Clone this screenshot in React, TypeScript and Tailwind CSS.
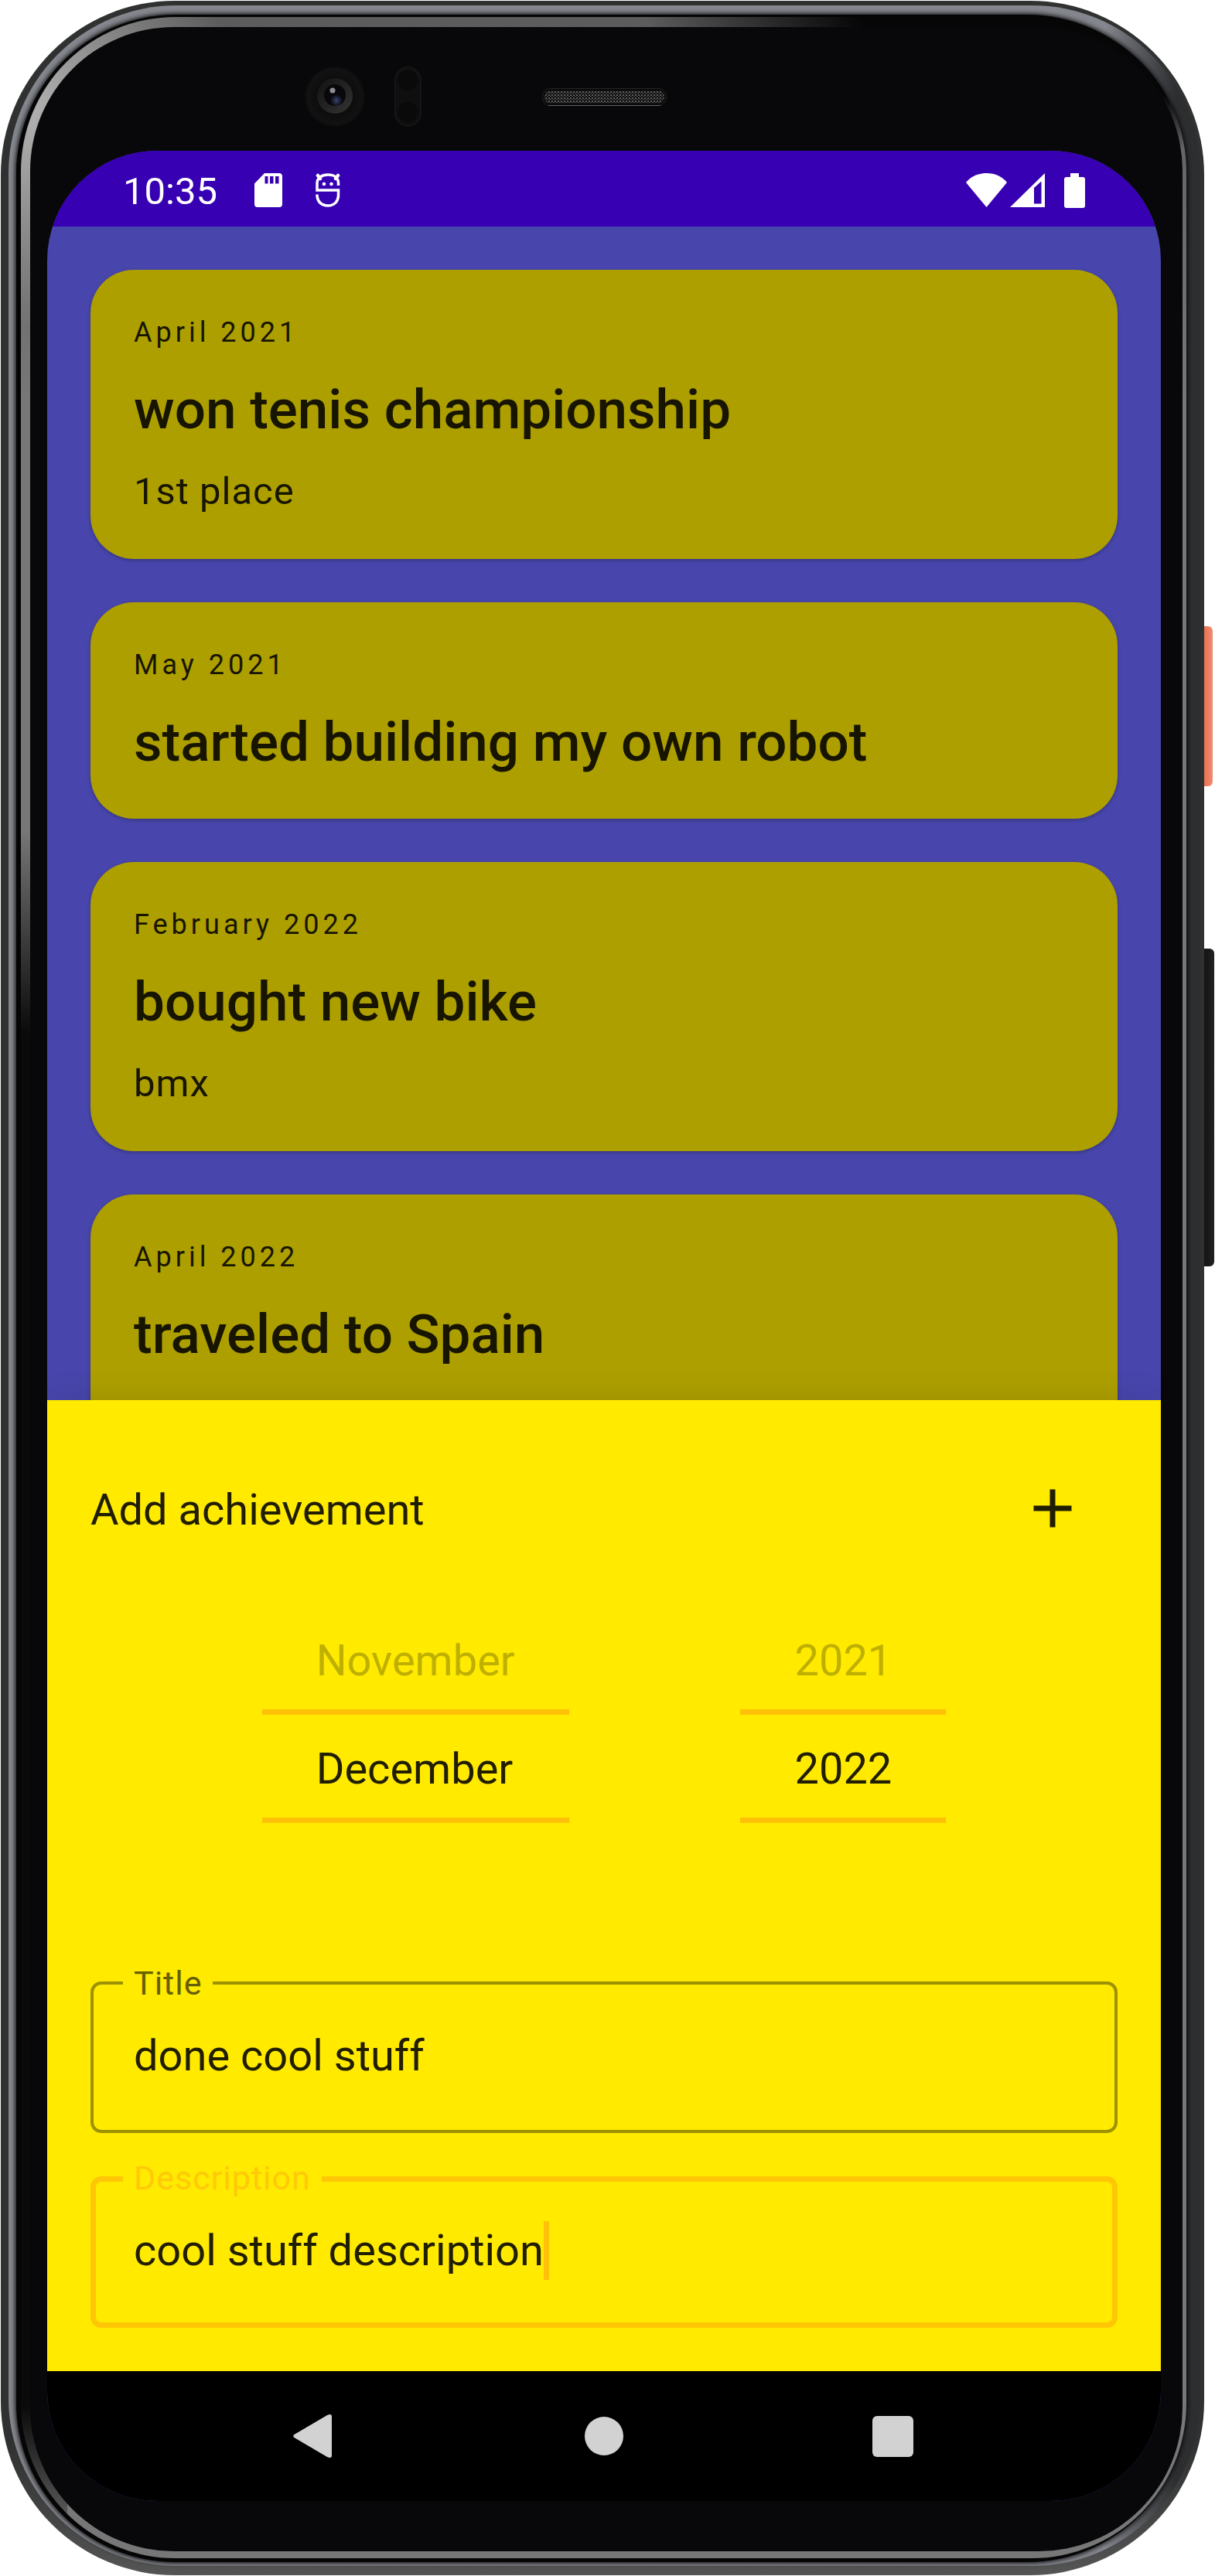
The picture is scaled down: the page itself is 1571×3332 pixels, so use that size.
import React, { useState } from "react";

type Achievement = { date: string; title: string; description?: string };

const achievements: Achievement[] = [
  { date: "April 2021", title: "won tenis championship", description: "1st place" },
  { date: "May 2021", title: "started building my own robot" },
  { date: "February 2022", title: "bought new bike", description: "bmx" },
  { date: "April 2022", title: "traveled to Spain" },
];

function SdCardIcon() {
  return (
    <svg viewBox="0 0 36 44" className="h-11 w-9" aria-label="SD card">
      <path
        fill="#fff"
        fillRule="evenodd"
        d="M13 0H31.500Q36 0 36 4V40Q36 44 32 44H4Q0 44 0 40V13.500ZM13.500 4V13.500H17.500V4ZM20 4V13.500H24.500V4ZM27 4V13.500H31.500V4Z"
      />
    </svg>
  );
}

function RobotIcon() {
  return (
    <svg viewBox="0 0 32 44" className="h-11 w-8" aria-label="Debugging" fill="none" stroke="#fff">
      <path strokeWidth="3.500" d="M29.500 16V13C29.500 6 24 2 16 2S2 6 2 13V22H29.500V28C29.500 37 24 42 16 42S2 37 2 28V27.500" />
      <path strokeWidth="4.500" d="M6 7L3 3M26 7L29 3" strokeLinecap="round" />
      <circle cx="11" cy="14" r="2.300" fill="#fff" stroke="none" />
      <circle cx="20.500" cy="14" r="2.300" fill="#fff" stroke="none" />
    </svg>
  );
}

function StatusBar() {
  return (
    <header className="flex h-[98px] items-center bg-[#3700b3] px-[98px] pt-1 text-white">
      <time className="pt-[3px] text-[49px] leading-[56px]">10:35</time>
      <div className="ml-12 flex items-center gap-[43px]">
        <SdCardIcon />
        <RobotIcon />
      </div>
      <div className="ml-auto flex items-center">
        <svg viewBox="0 0 53 44" className="h-11 w-[53px]" aria-label="Wi-Fi">
          <path fill="#fff" d="M26.500 44L0 12C6 4.500 15 0 26.500 0S47 4.500 53 12Z" />
        </svg>
        <svg viewBox="0 0 45 44" className="ml-1 h-11 w-[45px]" aria-label="Mobile signal">
          <path fill="#fff" fillRule="evenodd" d="M0 44L45 0V44ZM31 19V39.500H40.500V10.500Z" />
        </svg>
        <svg viewBox="0 0 27 45" className="ml-[25px] h-[45px] w-[27px]" aria-label="Battery">
          <path fill="#fff" d="M8 0H19V5H24Q27 5 27 8V42Q27 45 24 45H3Q0 45 0 42V8Q0 5 3 5H8Z" />
        </svg>
      </div>
    </header>
  );
}

function AchievementCard({ date, title, description }: Achievement) {
  return (
    <li className="flex shrink-0 flex-col rounded-[56px] bg-[#ad9f00] p-[56px] text-[#171500] shadow-[0_2px_5px_rgba(0,0,0,0.25)] last:min-h-[374px]">
      <span className="text-[36px] leading-[50px] tracking-[5px]">{date}</span>
      <h2 className="mt-8 text-[71px] leading-[86px] font-medium whitespace-nowrap">{title}</h2>
      {description && <p className="mt-8 text-[49px] leading-[62px] tracking-[1px]">{description}</p>}
    </li>
  );
}

function Picker({ label, previous, value }: { label: string; previous: string; value: string }) {
  return (
    <div role="group" aria-label={label} className="flex flex-col text-[56px] leading-[66px]">
      <button type="button" className="h-[126px] px-[70px] text-left text-[#bfb000]">
        {previous}
      </button>
      <button
        type="button"
        aria-current="true"
        className="h-[147px] border-y-[7px] border-[#ffc107] px-[70px] pt-[7px] text-left text-[#211e00]"
      >
        {value}
      </button>
      <div className="h-[140px]" />
    </div>
  );
}

function TextField({
  id,
  label,
  initial,
  active = false,
}: {
  id: string;
  label: string;
  initial: string;
  active?: boolean;
}) {
  const [value, setValue] = useState(initial);
  return (
    <div
      className={
        active
          ? "relative flex h-[196px] items-center rounded-[14px] px-[56px] pb-1 inset-ring-[7px] inset-ring-[#ffc606]"
          : "relative flex h-[196px] items-center rounded-[14px] px-[56px] pb-1 inset-ring-4 inset-ring-[#9e9100]"
      }
    >
      <label
        htmlFor={id}
        className={
          active
            ? "absolute top-0.5 left-[42px] -translate-y-1/2 bg-[#ffea00] px-[14px] text-[43px] leading-[50px] tracking-[1px] text-[#ffc909]"
            : "absolute top-0.5 left-[42px] -translate-y-1/2 bg-[#ffea00] px-[14px] text-[43px] leading-[50px] tracking-[1px] text-[#665e00]"
        }
      >
        {label}
      </label>
      <input
        id={id}
        type="text"
        value={value}
        onChange={(e) => setValue(e.target.value)}
        className="field-sizing-content max-w-full bg-transparent text-[56px] leading-[66px] text-[#211e00] caret-[#ffc107] outline-none"
      />
      {active && <span aria-hidden="true" className="h-[76px] w-[7px] bg-[#ffc107]" />}
    </div>
  );
}

function AddSheet() {
  return (
    <form className="relative bg-[#ffea00] p-[56px] shadow-[0_0_40px_rgba(0,0,0,0.12)]" onSubmit={(e) => e.preventDefault()}>
      <div className="flex items-center justify-between">
        <h1 className="pt-1 text-[56px] leading-[66px] text-[#211e00]">Add achievement</h1>
        <button type="submit" aria-label="Add" className="flex size-[168px] items-center justify-center">
          <svg viewBox="0 0 24 24" className="size-[84px]" fill="#211e00">
            <path d="M19 13h-6v6h-2v-6H5v-2h6V5h2v6h6v2z" />
          </svg>
        </button>
      </div>
      <div className="mt-[50px] flex justify-evenly">
        <Picker label="Month" previous="November" value="December" />
        <Picker label="Year" previous="2021" value="2022" />
      </div>
      <div className="mt-[65px] flex flex-col gap-[56px]">
        <TextField id="title" label="Title" initial="done cool stuff" />
        <TextField id="description" label="Description" initial="cool stuff description" active />
      </div>
    </form>
  );
}

function NavBar() {
  return (
    <nav className="grid h-[168px] grid-cols-3 bg-black px-40">
      <button type="button" aria-label="Back" className="flex items-center justify-center">
        <svg viewBox="0 0 58 58" className="size-[58px]" fill="#d2d2d2">
          <path d="M1.500 27L44 2Q50 -0.500 50 4V54Q50 58.500 44 56L1.500 31Q-1 29 1.500 27Z" />
        </svg>
      </button>
      <button type="button" aria-label="Home" className="flex items-center justify-center">
        <span className="size-[50px] rounded-full bg-[#d2d2d2]" />
      </button>
      <button type="button" aria-label="Recent apps" className="flex items-center justify-center">
        <span className="size-[53px] rounded-md bg-[#d2d2d2]" />
      </button>
    </nav>
  );
}

function BezelTop() {
  return (
    <div className="grid h-[160px] grid-cols-[1fr_auto_1fr] items-center pt-5">
      <div className="flex items-center justify-end gap-[38px] pr-[156px]">
        <svg viewBox="0 0 78 78" className="size-[78px]" aria-hidden="true">
          <defs>
            <radialGradient id="rim">
              <stop offset="0.55" stopColor="#0c0c0d" />
              <stop offset="0.9" stopColor="#121213" />
              <stop offset="1" stopColor="#0b0b0c" />
            </radialGradient>
            <linearGradient id="barrel" x1="0" y1="0" x2="1" y2="1">
              <stop offset="0" stopColor="#111" />
              <stop offset="1" stopColor="#343434" />
            </linearGradient>
            <radialGradient id="flare">
              <stop offset="0" stopColor="#34456f" />
              <stop offset="1" stopColor="#34456f" stopOpacity="0" />
            </radialGradient>
          </defs>
          <circle cx="39" cy="39" r="39" fill="url(#rim)" />
          <circle cx="39" cy="38" r="23" fill="url(#barrel)" />
          <circle cx="39" cy="37" r="14" fill="#08080c" />
          <circle cx="41" cy="44" r="8" fill="url(#flare)" />
          <circle cx="36" cy="31" r="3.500" fill="#8d8d92" />
        </svg>
        <svg viewBox="0 0 35 78" className="h-[78px] w-[35px]" aria-hidden="true">
          <rect x="1" y="1" width="33" height="76" rx="16.500" fill="#0f0f10" stroke="#151516" strokeWidth="2" />
          <circle cx="17" cy="18" r="13" fill="#0a0a0b" />
          <circle cx="17" cy="59" r="13" fill="#0a0a0b" />
        </svg>
      </div>
      <svg viewBox="0 0 161 23" className="h-[23px] w-[161px]" aria-hidden="true">
        <defs>
          <pattern id="mesh" width="4" height="4" patternUnits="userSpaceOnUse">
            <rect width="4" height="4" fill="#121212" />
            <rect width="2" height="2" fill="#5c5c5c" />
            <rect x="2" y="2" width="2" height="1" fill="#505050" />
          </pattern>
        </defs>
        <rect x="0.500" y="0.500" width="160" height="22" rx="10" fill="#0b0b0b" stroke="#242424" />
        <rect x="3" y="3" width="155" height="17" rx="8" fill="url(#mesh)" />
        <path d="M8 22.500H153" stroke="#606060" />
      </svg>
    </div>
  );
}

export default function App() {
  return (
    <div className="relative bg-white pt-px pr-[14px] pb-px pl-px font-[Roboto,sans-serif]">
      <div className="absolute top-[810px] right-[3px] h-[207px] w-5 rounded-md bg-linear-to-r from-[#e0603f] to-[#f08b70]" />
      <div className="absolute top-[1227px] right-px h-[411px] w-5 rounded-md bg-linear-to-r from-[#0d0d0d] to-[#222]" />
      <div className="relative rounded-[225px] bg-linear-to-b from-[#303131] from-95% to-[#555] pt-[6px] pr-[5px] pb-3 pl-[10px]">
        <div className="rounded-[217px] bg-linear-to-r from-[#85878e] from-92% to-[#2c2e30] to-98% pt-3 pr-[18px] pb-[5px] pl-[10px]">
          <div className="rounded-[206px] bg-[#050506] pt-[3px] pb-[5px] pl-[6px] shadow-[0_0_6px_1px_#000]">
            <div className="rounded-[200px] [background:radial-gradient(ellipse_700px_170px_at_top_right,#060607_60%,transparent),linear-gradient(to_bottom,transparent_32%,#0a0a0b_40%,#0a0a0b_94%,transparent)_left/60px_100%_no-repeat,radial-gradient(circle_280px_at_0_120px,#b4b4b4,transparent),linear-gradient(to_bottom,#5c5c5c,#777_15%,#777)] pt-[13px] pr-[5px] pb-[9px] pl-[12px]">
              <div className="rounded-[186px] bg-[#08080a] pr-7 pb-[65px] pl-[22px]">
                <BezelTop />
                <main className="overflow-hidden rounded-[142px] bg-[#4846ac]">
                  <StatusBar />
                  <ul className="flex h-[1518px] flex-col gap-[56px] overflow-hidden p-[56px]">
                    {achievements.map((a) => (
                      <AchievementCard key={a.date} {...a} />
                    ))}
                  </ul>
                  <AddSheet />
                  <NavBar />
                </main>
              </div>
            </div>
          </div>
        </div>
      </div>
    </div>
  );
}
